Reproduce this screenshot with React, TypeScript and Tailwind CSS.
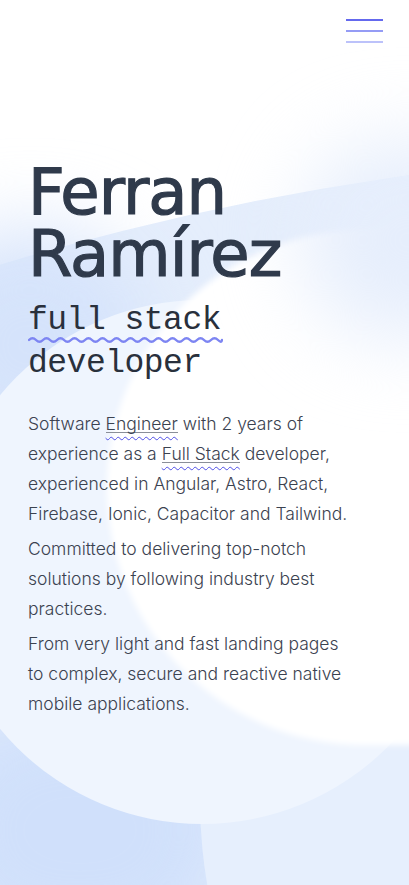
export default function App() {
  return (
    <div className="relative min-h-screen w-full overflow-hidden bg-white">
      {/* soft background shapes, behind everything */}
      <div className="pointer-events-none absolute inset-0">
        <div className="absolute left-[-1967px] top-[148px] h-[5522px] w-[5522px] rounded-full bg-[#e5eefc]" />
        <div className="absolute left-[-90px] top-[230px] h-[230px] w-[240px] rounded-full bg-[#d5e3fb] blur-2xl" />
        <div className="absolute left-[-80px] top-[700px] h-[260px] w-[320px] rounded-full bg-[#d0e0fb] blur-2xl" />
        <div className="absolute left-[200px] top-[300px] h-[1000px] w-[1000px] rounded-full bg-[#e6effd]" />
        <div className="absolute left-[-60px] top-[300px] h-[524px] w-[524px] rounded-full bg-[#eff5fe]" />
        <div className="absolute left-[107px] top-[230px] h-[515px] w-[566px] rounded-full bg-white blur-[3px]" />
        <div className="absolute left-[300px] top-[140px] h-[200px] w-[220px] rounded-full bg-[#e6eefc] blur-2xl" />
      </div>

      <div className="relative flex flex-col">
        <header className="flex justify-end px-[26px] pt-[19px]">
          <button aria-label="menu" className="flex w-[37px] flex-col gap-[9px]">
            <span className="h-[2px] w-full bg-[#6469ee]" />
            <span className="h-[2px] w-full bg-[#959cf5]" />
            <span className="h-[2px] w-full bg-[#bcc2fa]" />
          </button>
        </header>

        <main className="flex flex-col px-7 pt-[118px]">
          <h1 className="font-['DejaVu_Sans',sans-serif] text-[64px] leading-[62px] tracking-[-1px] text-[#2f3a4b] [-webkit-text-stroke:1.2px_#2f3a4b]">
            Ferran
            <br />
            Ramírez
          </h1>
          <h2 className="mt-[14px] font-['Liberation_Mono',monospace] text-[33px] leading-[43px] tracking-[-0.5px] text-[#29303c]">
            <span className="relative inline-block">
              full stack
              <svg
                className="absolute left-0 top-[37px] h-[8px] w-[195px]"
                viewBox="0 0 195 8"
                fill="none"
                aria-hidden
              >
                <path
                  d="M1 4 Q4.5 0.5 8 4 T15 4 T22 4 T29 4 T36 4 T43 4 T50 4 T57 4 T64 4 T71 4 T78 4 T85 4 T92 4 T99 4 T106 4 T113 4 T120 4 T127 4 T134 4 T141 4 T148 4 T155 4 T162 4 T169 4 T176 4 T183 4 T190 4 T194 4"
                  stroke="#7d85f2"
                  strokeWidth="2.4"
                  strokeLinecap="round"
                />
              </svg>
            </span>
            <br />
            developer
          </h2>

          <div className="mt-6 flex max-w-[321px] flex-col gap-[5px] font-['Inter',sans-serif] text-[17.5px] leading-[30px] font-light text-[#3b4250]">
            <p>
              Software{" "}
              <span className="bg-[linear-gradient(#8a8f99,#8a8f99)] bg-[length:100%_1px] bg-[position:0_19px] bg-no-repeat underline decoration-[#4f4fe6] decoration-wavy decoration-1 underline-offset-[6px]">
                Engineer
              </span>{" "}
              with 2 years of experience as a{" "}
              <span className="bg-[linear-gradient(#8a8f99,#8a8f99)] bg-[length:100%_1px] bg-[position:0_19px] bg-no-repeat underline decoration-[#4f4fe6] decoration-wavy decoration-1 underline-offset-[6px]">
                Full Stack
              </span>{" "}
              developer, experienced in Angular, Astro, React, Firebase, Ionic, Capacitor and Tailwind.
            </p>
            <p>Committed to delivering top-notch solutions by following industry best practices.</p>
            <p>From very light and fast landing pages to complex, secure and reactive native mobile applications.</p>
          </div>
        </main>
      </div>
    </div>
  );
}
